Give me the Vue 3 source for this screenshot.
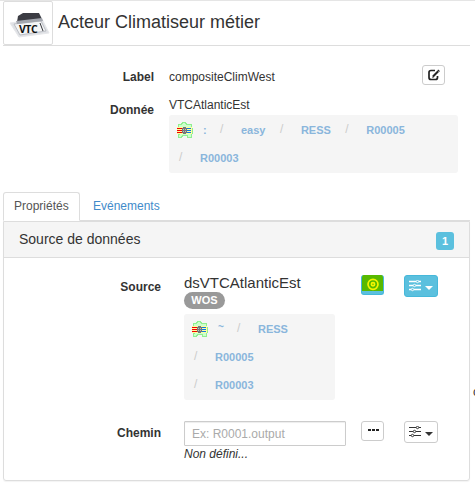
<script setup>
const dataPath = ['easy', 'RESS', 'R00005', 'R00003']
const sourcePath = ['RESS', 'R00005', 'R00003']
</script>

<template>
  <main class="page">
    <header class="head">
      <div class="thumb">
        <svg width="42" height="32" viewBox="0 0 42 32">
          <path d="M2 11 34 7 41 21 11 25Z" fill="#dfe1e5" stroke="#e6e7ea" />
          <path d="M6 12 33 9 38 19 12 23Z" fill="#f4f5f6" stroke="#bbbec4" />
          <path d="M10 4 15 1 31 1 34 7 9 10Z" fill="#3b3c43" />
          <path d="M8 9 34 6 35 9 9 12Z" fill="#a3a6ae" />
          <path d="M32 11 35 19" stroke="#34363b" />
          <text x="11" y="21" class="vtc">VTC</text>
        </svg>
      </div>
      <h1>Acteur Climatiseur métier</h1>
    </header>

    <section class="info">
      <div class="row label-row">
        <b class="name">Label</b>
        <span class="value">compositeClimWest</span>
        <button class="btn small edit">
          <svg width="12" height="12" viewBox="0 0 12 12" fill="none" stroke="#222">
            <path d="M7 1.5H3Q1 1.5 1 3.5V8.5Q1 10.5 3 10.5H7.5Q9.5 10.5 9.5 8.5V7" stroke-width="1.7" />
            <path d="M5 7.5 10.2 2.2" stroke-width="2" />
            <path d="M9.8 .8 11.5 2.5M4.2 8.2 6 7.8" stroke-width="1.1" />
          </svg>
        </button>
      </div>
      <div class="row data-row">
        <b class="name">Donnée</b>
        <div class="value data">
          <span>VTCAtlanticEst</span>
          <div class="crumbs">
            <span class="root">
              <svg width="16" height="17" viewBox="0 0 16 17" shape-rendering="crispEdges">
                <path d="M1.5 2.5H4.5V1.5H5.5V.5H8.5V1.5H9.5V2.5H14.5V6H15V11H14.5V15.5H10.5V13.5H5.5V14.5H4.5V15.5H1.5V12.5H2.5V11.5H1.5Z" fill="#ccffcc" stroke="#90ee90" />
                <path d="M0 5H15V12H0Z" fill="#ffff9c" />
                <path d="M0 6H6V7H0ZM0 8H6V9H0ZM0 10H6V11H0Z" fill="#f00000" />
                <path d="M9 6H14V7H9ZM9 8H14V9H9ZM9 10H14V11H9Z" fill="#0878e8" />
                <path d="M6 5H9V6H10V11H9V12H6V11H5V6H6Z" fill="#777" />
                <path d="M6 7H7V8H6ZM8 7H9V8H8ZM6 9H7V10H6ZM8 9H9V10H8Z" fill="#bbb" />
              </svg>
              <b>:</b>
            </span>
            <span v-for="part in dataPath" :key="part" class="crumb"><i>/</i><b>{{ part }}</b></span>
          </div>
        </div>
      </div>
    </section>

    <nav class="tabs">
      <a class="tab active">Propriétés</a>
      <a class="tab">Evénements</a>
    </nav>

    <section class="panel">
      <div class="panel-head"><span>Source de données</span><b class="count">1</b></div>
      <div class="source-row">
        <b class="name">Source</b>
        <div class="source">
          <div class="source-name">dsVTCAtlanticEst</div>
          <b class="badge">WOS</b>
          <div class="crumbs narrow">
            <span class="root">
              <svg width="16" height="17" viewBox="0 0 16 17" shape-rendering="crispEdges">
                <path d="M1.5 2.5H4.5V1.5H5.5V.5H8.5V1.5H9.5V2.5H14.5V6H15V11H14.5V15.5H10.5V13.5H5.5V14.5H4.5V15.5H1.5V12.5H2.5V11.5H1.5Z" fill="#ccffcc" stroke="#90ee90" />
                <path d="M0 5H15V12H0Z" fill="#ffff9c" />
                <path d="M0 6H6V7H0ZM0 8H6V9H0ZM0 10H6V11H0Z" fill="#f00000" />
                <path d="M9 6H14V7H9ZM9 8H14V9H9ZM9 10H14V11H9Z" fill="#0878e8" />
                <path d="M6 5H9V6H10V11H9V12H6V11H5V6H6Z" fill="#777" />
                <path d="M6 7H7V8H6ZM8 7H9V8H8ZM6 9H7V10H6ZM8 9H9V10H8Z" fill="#bbb" />
              </svg>
              <b class="tilde">~</b>
            </span>
            <span v-for="part in sourcePath" :key="part" class="crumb"><i>/</i><b>{{ part }}</b></span>
          </div>
        </div>
        <button class="btn small target">
          <svg width="21" height="16" viewBox="0 0 21 16" fill="none" stroke="#f4f400">
            <circle cx="11" cy="9.3" r="5" stroke-width="1.7" />
            <circle cx="11" cy="9.3" r="1.6" stroke-width="1.7" />
          </svg>
        </button>
        <button class="btn menu primary">
          <svg width="12" height="12" viewBox="0 0 12 12" fill="none" stroke="currentColor">
            <path d="M0 1.5H7M10 1.5H12M0 5.5H4M7 5.5H12M0 9.5H2M5 9.5H12" stroke-width="1.4" />
            <circle cx="8.5" cy="1.5" r="1.2" /><circle cx="5.5" cy="5.5" r="1.2" /><circle cx="3.5" cy="9.5" r="1.2" />
          </svg>
          <span class="caret"></span>
        </button>
      </div>
      <div class="source-row path-row">
        <b class="name">Chemin</b>
        <div class="source">
          <input placeholder="Ex: R0001.output" />
          <em>Non défini...</em>
        </div>
        <button class="btn small dots">
          <svg width="12" height="4" viewBox="0 0 12 4"><path d="M1 1H4V3H1ZM5 1H8V3H5ZM9 1H12V3H9Z" fill="#222" /></svg>
        </button>
        <button class="btn menu">
          <svg width="12" height="12" viewBox="0 0 12 12" fill="none" stroke="currentColor">
            <path d="M0 1.5H7M10 1.5H12M0 5.5H4M7 5.5H12M0 9.5H2M5 9.5H12" stroke-width="1.2" />
            <circle cx="8.5" cy="1.5" r="1.2" /><circle cx="5.5" cy="5.5" r="1.2" /><circle cx="3.5" cy="9.5" r="1.2" />
          </svg>
          <span class="caret"></span>
        </button>
      </div>
    </section>
    <span class="edge">c</span>
  </main>
</template>

<style>
body { margin: 0; background: #fff; overflow: hidden; }
</style>

<style scoped>
* { box-sizing: border-box; }
.page {
  position: relative;
  width: 475px;
  height: 483px;
  padding: 0 5px 0 3px;
  overflow: hidden;
  border-top: 1px solid #e5e5e5;
  color: #333;
  font: 12px/17px "Liberation Sans", Arial, sans-serif;
}
.head { display: flex; height: 45px; border-bottom: 1px solid #ddd; }
.thumb {
  width: 50px;
  height: 44px;
  padding: 10px 0 0 4px;
  border: 1px solid #ddd;
  border-radius: 2px;
}
.thumb svg { display: block; }
.vtc { font: bold 10.5px "Open Sans", sans-serif; fill: #111; letter-spacing: -.5px; }
h1 { margin: 11px 0 0 5px; font-size: 18px; line-height: 20px; font-weight: 400; }
.info { height: 146px; padding-top: 19px; }
.row { display: flex; align-items: flex-start; }
.name { flex: none; width: 151px; text-align: right; }
.value { margin-left: 15px; }
.label-row { height: 32px; }
.label-row .name, .label-row .value { margin-top: 4px; }
.data-row .name { margin-top: 5px; }
.data { width: 289px; }
.data > span { display: block; height: 18px; }
.btn {
  display: flex;
  flex: none;
  align-items: center;
  justify-content: center;
  margin: 0;
  padding: 0;
  border: 1px solid #ccc;
  border-radius: 3px;
  background: #fff;
  color: #333;
}
.small { width: 23px; height: 20px; }
.edit { margin: 0 25px 0 auto; }
.menu { width: 34px; height: 22px; gap: 4px; }
.caret {
  margin-top: 4px;
  border: 4px solid transparent;
  border-top-color: currentColor;
  border-bottom: 0;
}
.crumbs {
  display: flex;
  flex-wrap: wrap;
  align-content: flex-start;
  height: 58px;
  padding: 1px 0 0 10px;
  border-radius: 3px;
  background: #f5f5f5;
  color: #8ab6dc;
  font-size: 11px;
}
.root { display: flex; width: 43px; height: 28px; margin-left: -2px; line-height: 28px; }
.root svg { flex: none; margin: 6px 10px 0 0; }
.tilde { font-size: 10px; line-height: 23px; }
.crumb { display: flex; height: 28px; padding-right: 14.4px; line-height: 28px; }
.crumb i { width: 21px; color: #ccc; font-size: 12px; line-height: 27px; font-style: normal; }
.crumbs.narrow { width: 151px; height: 86px; margin-top: 5px; }
.narrow .root { width: 45px; }
.tabs { display: flex; height: 29px; border-bottom: 1px solid #ddd; }
.tab { height: 29px; padding: 6px 13px 0; color: #428bca; }
.active {
  width: 77px;
  padding: 5px 0 0 10px;
  border: 1px solid #ddd;
  border-bottom-color: #fff;
  border-radius: 3px 3px 0 0;
  background: #fff;
  color: #555;
}
.panel {
  height: 260px;
  border: 1px solid #ddd;
  border-radius: 0 0 3px 3px;
  box-shadow: 0 1px 1px rgba(0, 0, 0, .05);
}
.panel-head {
  display: flex;
  justify-content: space-between;
  height: 36px;
  padding: 9px 15px 0;
  border-bottom: 1px solid #ddd;
  background: #f5f5f5;
  font-size: 14px;
}
.count {
  width: 18px;
  height: 18px;
  margin-top: 1px;
  border-radius: 3px;
  background: #5bc0de;
  color: #fff;
  font-size: 11px;
  line-height: 18px;
  text-align: center;
}
.source-row { display: flex; align-items: flex-start; padding: 17px 0 0 6px; }
.source-row .name { margin-top: 4px; }
.source { width: 162px; margin: 0 15px 0 23px; }
.source-name { height: 17px; font-size: 15px; line-height: 15px; }
.badge {
  display: block;
  width: 41px;
  height: 17px;
  border-radius: 9px;
  background: #999;
  color: #fff;
  font-size: 11px;
  text-align: center;
}
.menu { margin-left: 20px; }
.target { align-items: flex-start; overflow: hidden; border-color: #46b8da; border-top: 0; background: #5bc0de; }
.target svg { background: #58b900; }
.primary { border-color: #46b8da; background: #5bc0de; color: #fff; }
.path-row { padding-top: 21px; }
input {
  display: block;
  width: 162px;
  height: 25px;
  padding: 0 7px;
  border: 1px solid #ccc;
  border-radius: 1px;
  box-shadow: inset 0 1px 1px rgba(0, 0, 0, .075);
  font: 12px "Liberation Sans", Arial, sans-serif;
}
input::placeholder { color: #aaa; }
em { display: block; }
.dots svg { margin-top: -2px; }
.edge { position: absolute; top: 383px; left: 473px; }
</style>
